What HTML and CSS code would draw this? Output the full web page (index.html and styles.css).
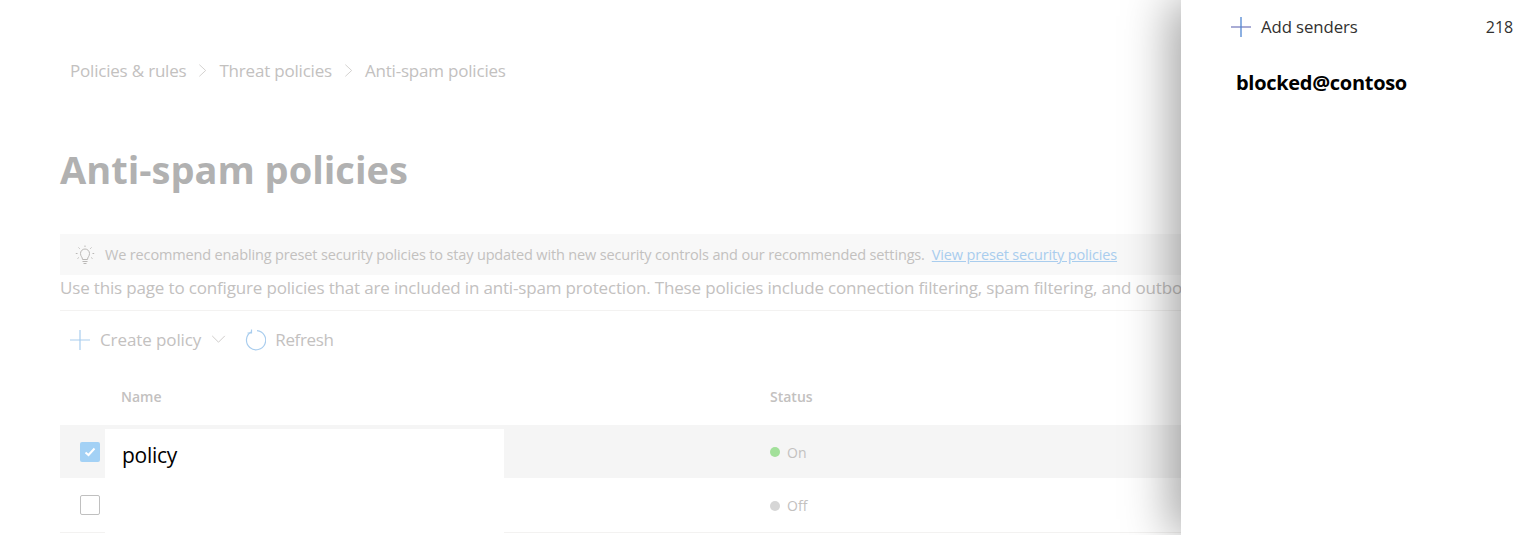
FILE: index.html
```html
<!DOCTYPE html>
<html lang="en">
<head>
    <meta charset="UTF-8">
    <meta name="viewport" content="width=device-width, initial-scale=1.0">
    <title>Anti-spam policies</title>
    <link rel="stylesheet" href="styles.css">
</head>
<body>

    <div class="page">
        <div class="breadcrumb">
            <span>Policies &amp; rules</span>
            <svg class="crumb-sep" viewBox="0 0 10 16"><path d="M1.5 1.5 L8.5 8 L1.5 14.5"/></svg>
            <span>Threat policies</span>
            <svg class="crumb-sep" viewBox="0 0 10 16"><path d="M1.5 1.5 L8.5 8 L1.5 14.5"/></svg>
            <span>Anti-spam policies</span>
        </div>

        <h1 class="title">Anti-spam policies</h1>

        <div class="notice">
            <svg class="bulb" viewBox="0 0 20 20">
                <path d="M7.5 14.5 C7.5 12 5.5 11.5 5.5 8.5 A4.5 4.5 0 0 1 14.5 8.5 C14.5 11.5 12.5 12 12.5 14.5 Z"/>
                <path d="M7.5 16.5 H12.5 M8.5 18.5 H11.5"/>
                <path d="M10 .5 V2 M3.5 2.5 L4.7 3.7 M16.5 2.5 L15.3 3.7 M.8 8.5 H2.5 M17.5 8.5 H19.2 M2.5 13.5 L3.8 12.6 M17.5 13.5 L16.2 12.6"/>
            </svg>
            <span>We recommend enabling preset security policies to stay updated with new security controls and our recommended settings.</span>
            <a href="#" class="notice-link">View preset security policies</a>
        </div>

        <p class="intro">Use this page to configure policies that are included in anti-spam protection. These policies include connection filtering, spam filtering, and outbound spam filtering.</p>

        <div class="toolbar">
            <button class="tool">
                <svg class="tool-icon" viewBox="0 0 20 20"><path d="M10 0 V20 M0 10 H20"/></svg>
                Create policy
                <svg class="caret" viewBox="0 0 16 10"><path d="M1 1 L8 8 L15 1"/></svg>
            </button>
            <button class="tool tool-tight">
                <svg class="tool-icon refresh" viewBox="0 0 22 22"><path d="M7 3 A9.6 9.6 0 1 0 13 1.6"/><path d="M7.5 .5 V4 H3.5"/></svg>
                Refresh
            </button>
        </div>

        <div class="policy-table">
            <div class="table-row table-head">
                <div class="col-check"></div>
                <div class="col-name">Name</div>
                <div class="col-status">Status</div>
            </div>
            <div class="table-row selected">
                <div class="col-check"><span class="checkbox checked"><svg viewBox="0 0 12 10"><path d="M1.5 5.5 L4.5 8 L10.5 1.5"/></svg></span></div>
                <div class="col-name"><span class="name-cover">policy</span></div>
                <div class="col-status"><span class="dot dot-on"></span>On</div>
            </div>
            <div class="table-row row-last">
                <div class="col-check"><span class="checkbox"></span></div>
                <div class="col-name"><span class="name-cover"></span></div>
                <div class="col-status"><span class="dot dot-off"></span>Off</div>
            </div>
        </div>
    </div>

    <div class="side-panel">
        <div class="panel-bar">
            <button class="add-senders">
                <svg class="add-icon" viewBox="0 0 20 20"><path class="add-h" d="M0 10 H20"/><path class="add-v" d="M10 0 V20"/></svg>
                Add senders
            </button>
            <span class="count">218</span>
        </div>
        <div class="blocked">blocked@contoso</div>
    </div>

</body>
</html>
```

FILE: styles.css
```css
html, body {
    height: 100%;
}

body {
    font-family: "Open Sans", "Noto Sans", Arial, sans-serif;
    background-color: #fff;
    margin: 0;
    padding: 0;
    overflow: hidden;
    position: relative;
}

.page {
    padding: 58px 0 0 60px;
    width: 1453px;
}

.breadcrumb {
    display: flex;
    align-items: center;
    height: 24px;
    padding-left: 10px;
    font-size: 17px;
    letter-spacing: -0.2px;
    color: #c3c1bf;
}

.crumb-sep {
    width: 9px;
    height: 15px;
    margin: 0 12px;
    fill: none;
    stroke: #cfcdcb;
    stroke-width: 1;
}

.title {
    margin: 62px 0 0;
    height: 51px;
    line-height: 50px;
    font-size: 38px;
    font-weight: 700;
    color: #b1b1b1;
}

.notice {
    display: flex;
    align-items: center;
    margin-top: 39px;
    height: 41px;
    padding-left: 15px;
    background-color: #f8f8f8;
    font-size: 14.5px;
    letter-spacing: -0.15px;
    color: #c3c1bf;
}

.bulb {
    width: 20px;
    height: 20px;
    margin-right: 10px;
    fill: none;
    stroke: #bab8b6;
    stroke-width: 1;
}

.notice-link {
    margin-left: 7px;
    color: #a9cdee;
}

.intro {
    margin: 0;
    height: 35px;
    line-height: 26px;
    border-bottom: 1px solid #f3f2f1;
    font-size: 17px;
    letter-spacing: -0.165px;
    white-space: nowrap;
    color: #c3c1bf;
}

.toolbar {
    display: flex;
    align-items: center;
    gap: 18px;
    height: 57px;
    padding-left: 10px;
}

.tool {
    display: flex;
    align-items: center;
    padding: 0;
    border: none;
    background: none;
    font-family: inherit;
    font-size: 17px;
    letter-spacing: -0.1px;
    color: #c3c1bf;
}

.tool-tight {
    letter-spacing: -0.35px;
}

.tool-icon {
    width: 20px;
    height: 20px;
    margin-right: 10px;
    fill: none;
    stroke: #a9cdee;
    stroke-width: 1.2;
}

.refresh {
    width: 22px;
    height: 22px;
    margin-right: 9px;
}

.caret {
    width: 15px;
    height: 9px;
    margin-left: 10px;
    fill: none;
    stroke: #c9c7c5;
    stroke-width: 1;
}

.policy-table {
    font-size: 14px;
    color: #c3c1bf;
}

.table-row {
    display: flex;
    align-items: center;
    height: 53px;
    border-bottom: 1px solid #f3f2f1;
}

.table-head {
    height: 57px;
    border-bottom: none;
    font-weight: 600;
}

.selected {
    background-color: #f5f5f5;
    border-bottom: none;
}

.row-last {
    height: 54px;
}

.col-check {
    width: 45px;
    display: flex;
    justify-content: center;
    padding-left: 15px;
    box-sizing: border-box;
}

.col-name {
    width: 665px;
    align-self: stretch;
    display: flex;
}

.table-head .col-name {
    align-items: center;
    padding-left: 16px;
    width: 649px;
}

.col-status {
    display: flex;
    align-items: center;
    padding-top: 1px;
}

.table-head .col-status {
    padding-top: 0;
}

.name-cover {
    display: block;
    width: 399px;
    margin-top: 4px;
    margin-bottom: -1px;
    padding: 4px 0 0 17px;
    box-sizing: border-box;
    background-color: #fff;
    font-size: 21px;
    line-height: 44px;
    letter-spacing: -0.3px;
    color: #000;
}

.checkbox {
    display: flex;
    align-items: center;
    justify-content: center;
    width: 20px;
    height: 20px;
    box-sizing: border-box;
    border: 1px solid #c0c0c0;
    border-radius: 2px;
}

.checked {
    border: none;
    background-color: #a3d1f5;
}

.checked svg {
    width: 12px;
    height: 10px;
    fill: none;
    stroke: #fff;
    stroke-width: 2;
}

.dot {
    width: 10px;
    height: 10px;
    margin-right: 7px;
    border-radius: 50%;
}

.dot-on {
    background-color: #a2e09a;
}

.dot-off {
    background-color: #d6d6d6;
}

/* flyout on top of the dimmed page */
.side-panel {
    position: absolute;
    top: 0;
    right: 0;
    bottom: 0;
    width: 332px;
    background-color: #fff;
    box-shadow: -10px 0 45px rgba(0, 0, 0, 0.36);
}

.panel-bar {
    display: flex;
    align-items: center;
    justify-content: space-between;
    height: 53px;
    padding-left: 50px;
}

.add-senders {
    display: flex;
    align-items: center;
    padding: 0;
    border: none;
    background: none;
    font-family: inherit;
    font-size: 16.8px;
    letter-spacing: -0.1px;
    color: #323130;
}

.add-icon {
    width: 20px;
    height: 20px;
    margin-right: 10px;
    fill: none;
    stroke-width: 1.3;
}

.add-h {
    stroke: #7a7fbe;
}

.add-v {
    stroke: #4f86d2;
}

.count {
    font-size: 16px;
    letter-spacing: -0.1px;
    color: #323130;
}

.blocked {
    padding-left: 55px;
    margin-top: 15px;
    font-size: 20px;
    line-height: 30px;
    font-weight: 700;
    letter-spacing: -0.3px;
    color: #000;
}
```
